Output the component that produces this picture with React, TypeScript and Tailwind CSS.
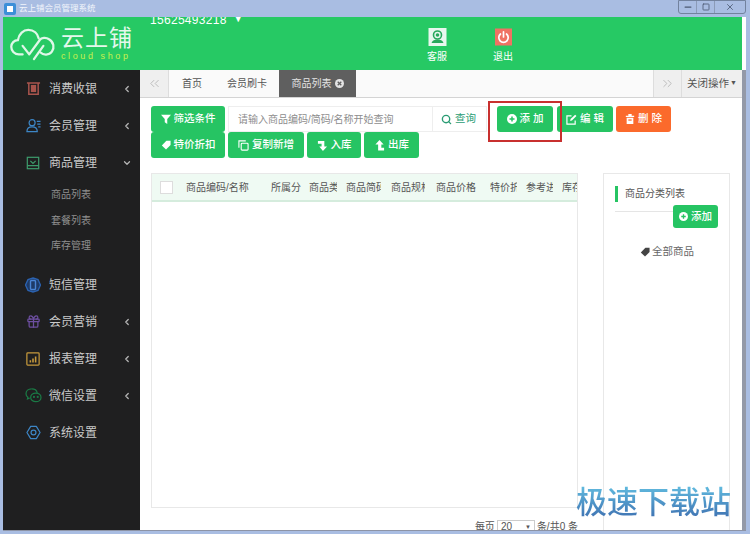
import React from 'react';
import { ChevronLeft, ChevronDown, ChevronsLeft, ChevronsRight, Search, Minus, Square, X, Gift } from 'lucide-react';

const cjk = "font-['Liberation_Sans','Noto_Sans_CJK_SC',sans-serif]";

function CloudLogo() {
  return (
    <svg viewBox="0 0 48 36" className="w-[46px] h-[34px]" fill="none" stroke="#dff7e8" strokeWidth="2.4" strokeLinecap="round" strokeLinejoin="round">
      <path d="M13 29 H9 C4 29 1 25 1 21 C1 17 4 14 8 14 C9 7 14 3 19 3 C25 3 29 7 30 12" />
      <path d="M13 20 L20 29 L31 14 C33 11 38 11 41 13 C46 16 47 22 44 26 C41 30 35 30 32 27" />
      <path d="M25 34 L35 20" />
    </svg>
  );
}

function CashIcon() {
  return (
    <svg viewBox="0 0 16 16" className="w-[15px] h-[15px]" fill="none" stroke="#a8544c" strokeWidth="1.6">
      <path d="M1 2 H15 M3 2 V14 H13 V2" />
      <rect x="6" y="5" width="4" height="6" fill="#a8544c" />
    </svg>
  );
}

function MemberIcon() {
  return (
    <svg viewBox="0 0 16 16" className="w-[15px] h-[15px]" fill="none" stroke="#3d86c6" strokeWidth="1.3">
      <circle cx="6.5" cy="5" r="3.2" />
      <path d="M1 14.5 C1 10.5 3.5 9.5 6.5 9.5 C9.5 9.5 12 10.5 12 14.5 Z" />
      <path d="M11.5 3.5 H15.5 M12 6.5 H15.5 M13 9.5 H15.5" />
    </svg>
  );
}

function GoodsIcon() {
  return (
    <svg viewBox="0 0 16 16" className="w-[14px] h-[14px]" fill="none" stroke="#3d9a6b" strokeWidth="1.4">
      <rect x="1.5" y="1.5" width="13" height="13" />
      <path d="M1.5 11 H14.5 M5 5.5 L8 8.5 L11 5.5" />
    </svg>
  );
}

function SmsIcon() {
  return (
    <svg viewBox="0 0 16 16" className="w-[16px] h-[16px]" fill="none" stroke="#2b62b0" strokeWidth="1.4">
      <path d="M8 1 L13 2.5 L15.5 8 L13 13.5 L8 15 L3 13.5 L.5 8 L3 2.5 Z" fill="#1e3a66" />
      <rect x="5.5" y="3.5" width="5" height="9" rx="1" stroke="#4a84d4" />
    </svg>
  );
}

function ReportIcon() {
  return (
    <svg viewBox="0 0 16 16" className="w-[14px] h-[14px]" fill="none" stroke="#c79a3c" strokeWidth="1.4">
      <rect x="1" y="1" width="14" height="14" rx="1" />
      <path d="M5 12 V9.5 M8 12 V7.5 M11 12 V5" strokeWidth="1.8" />
    </svg>
  );
}

function WechatIcon() {
  return (
    <svg viewBox="0 0 18 16" className="w-[17px] h-[15px]" fill="none" stroke="#1a7a45" strokeWidth="1.3">
      <path d="M7 1 C3.5 1 1 3.2 1 6 C1 7.6 1.8 8.9 3 9.8 L2.6 11.6 L5 10.6" />
      <path d="M7 1 C10 1 12.5 2.8 13 5.2" />
      <ellipse cx="11.5" cy="10" rx="5.5" ry="4.6" />
      <circle cx="9.5" cy="9.5" r=".5" />
      <circle cx="13.5" cy="9.5" r=".5" />
    </svg>
  );
}

function GearIcon() {
  return (
    <svg viewBox="0 0 16 16" className="w-[15px] h-[15px]" fill="none" stroke="#3d86c6" strokeWidth="1.3">
      <path d="M5 1.5 H11 L15 8 L11 14.5 H5 L1 8 Z" strokeLinejoin="round" />
      <circle cx="8" cy="8" r="2.6" />
    </svg>
  );
}

function PlusDot({ size = 'w-[10px] h-[10px]', fill = '#26c463' }: { size?: string; fill?: string }) {
  return (
    <svg viewBox="0 0 12 12" className={size}>
      <circle cx="6" cy="6" r="6" fill="#ffffff" />
      <path d="M3 6 H9 M6 3 V9" stroke={fill} strokeWidth="1.8" />
    </svg>
  );
}

function FilterSolid() {
  return (
    <svg viewBox="0 0 12 12" className="w-[10px] h-[10px]" fill="#ffffff">
      <path d="M0 1 H12 L7.5 6 V12 L4.5 10 V6 Z" />
    </svg>
  );
}

function TagSolid({ color = '#ffffff' }: { color?: string }) {
  return (
    <svg viewBox="0 0 12 12" className="w-[10px] h-[10px]" fill={color}>
      <path d="M6.5 1 H11.5 V6 L6 11.5 L1 6.5 Z" />
    </svg>
  );
}

function CopyIcon() {
  return (
    <svg viewBox="0 0 12 12" className="w-[11px] h-[11px]" fill="none" stroke="#ffffff" strokeWidth="1.2">
      <path d="M1 8.5 V1 H8.5" />
      <rect x="3.5" y="3.5" width="7.5" height="7.5" rx="1" />
    </svg>
  );
}

function InIcon() {
  return (
    <svg viewBox="0 0 12 12" className="w-[11px] h-[11px]" fill="#ffffff">
      <path d="M1 1 H8 V7 H11 L6.5 12 L2.5 7 H5 V4 H1 Z" />
    </svg>
  );
}

function OutIcon() {
  return (
    <svg viewBox="0 0 12 12" className="w-[11px] h-[11px]" fill="#ffffff">
      <path d="M6 0 L10.5 5 H8 V8.5 H11 V11.5 H4.5 V5 H1.5 Z" />
    </svg>
  );
}

function EditIcon() {
  return (
    <svg viewBox="0 0 12 12" className="w-[11px] h-[11px]" fill="none" stroke="#ffffff" strokeWidth="1.3">
      <path d="M10 7 V11 H1 V2 H6" />
      <path d="M4.5 7.5 L5 5.5 L10 .8 L11.4 2.2 L6.5 7 Z" fill="#ffffff" stroke="none" />
    </svg>
  );
}

function TrashIcon() {
  return (
    <svg viewBox="0 0 12 12" className="w-[10px] h-[10px]" fill="#ffffff">
      <path d="M4 0 H8 V2 H11 V3.5 H1 V2 H4 Z M2 4.5 H10 V12 H2 Z" />
      <path d="M4 6.5 H8 V8 H4 Z" fill="#fb6a2c" />
    </svg>
  );
}

function ServiceIcon() {
  return (
    <svg viewBox="0 0 18 18" className="w-[19px] h-[18px]" fill="none">
      <rect width="18" height="18" fill="#e8f7ee" />
      <circle cx="9" cy="7" r="4" stroke="#27a85c" strokeWidth="1.6" />
      <circle cx="9" cy="7" r="1.8" fill="#27a85c" />
      <path d="M3 15 C4 12 6 11.5 9 11.5 C12 11.5 14 12 15 15 Z" fill="#27a85c" />
    </svg>
  );
}

function ExitIcon() {
  return (
    <svg viewBox="0 0 18 18" className="w-[17px] h-[18px]" fill="none" stroke="#ffffff" strokeWidth="1.8" strokeLinecap="round">
      <rect width="18" height="18" fill="#ef7263" stroke="none" />
      <path d="M5.8 5.8 A5 5 0 1 0 12.2 5.8 M9 3.5 V9" />
    </svg>
  );
}

function NavRow({ icon, label, arrow }: { icon: React.ReactNode; label: string; arrow?: 'left' | 'down' }) {
  return (
    <div className="h-[37px] flex items-center pl-[17px] pr-[8px]">
      <div className="w-[26px] flex justify-center shrink-0">{icon}</div>
      <span className="ml-[3px] text-[12px] text-[#c9c9c9] flex-1">{label}</span>
      {arrow === 'left' && <ChevronLeft className="w-[10px] h-[10px] text-[#b5b5b5]" strokeWidth={3} />}
      {arrow === 'down' && <ChevronDown className="w-[10px] h-[10px] text-[#b5b5b5]" strokeWidth={3} />}
    </div>
  );
}

function Btn({ icon, label, w, color = 'bg-[#26c463]', h = 'h-[26px]' }: { icon: React.ReactNode; label: string; w: string; color?: string; h?: string }) {
  return (
    <div className={`${w} ${h} ${color} rounded-[3px] flex items-center justify-center gap-[3px] text-white text-[10.5px] font-medium shrink-0`}>
      {icon}
      <span>{label}</span>
    </div>
  );
}

export default function App() {
  // slot width, then the width the label is clipped to
  const cols = [
    ['w-[85px]', 'w-[68px]', '商品编码/名称'],
    ['w-[38px]', 'w-[30px]', '所属分类'],
    ['w-[37px]', 'w-[28px]', '商品类别'],
    ['w-[45px]', 'w-[35px]', '商品简码'],
    ['w-[45px]', 'w-[34px]', '商品规格'],
    ['w-[54px]', 'w-[44px]', '商品价格'],
    ['w-[36px]', 'w-[27px]', '特价折扣'],
    ['w-[36px]', 'w-[27px]', '参考进价'],
    ['w-[15px]', 'w-[15px]', '库存'],
  ];

  return (
    <div className={`${cjk} relative w-[750px] h-[534px] overflow-hidden flex flex-col bg-[#a9bde2]`}>
      {/* Title bar */}
      <div className="h-[17px] shrink-0 flex items-center pl-[4px]">
        <div className="w-[12px] h-[12px] bg-[#3d8fd8] rounded-[2px] flex items-center justify-center">
          <div className="w-[6px] h-[6px] bg-white" />
        </div>
        <span className="ml-[3px] text-[8.5px] text-[#f2f5fb]">云上铺会员管理系统</span>
        <div className="ml-auto mr-[4px] flex h-[14px] -mt-[3px] border border-[#72829e] rounded-b-[3px] text-[#4c5a73]">
          <div className="w-[18px] flex items-center justify-center border-r border-[#8b9bb8]"><Minus className="w-[10px] h-[10px]" strokeWidth={3} /></div>
          <div className="w-[18px] flex items-center justify-center border-r border-[#8b9bb8]"><Square className="w-[8px] h-[8px]" strokeWidth={2.5} /></div>
          <div className="w-[30px] flex items-center justify-center"><X className="w-[10px] h-[10px]" strokeWidth={2} /></div>
        </div>
      </div>

      <div className="flex-1 min-h-0 flex flex-col ml-[3px] mr-[4px] mb-[3px] border-b border-[#8d94a6]">
        {/* Header */}
        <div className="h-[53px] shrink-0 bg-[#26c964] flex relative overflow-hidden box-content border-r-[4px] border-white">
          <div className="w-[137px] shrink-0 flex items-center pl-[7px] pt-[1px]">
            <CloudLogo />
            <div className="ml-[5px] flex flex-col items-start">
              <span className="text-[23px] leading-[25px] text-[#e4f8ec] tracking-[1px]">云上铺</span>
              <span className="text-[9px] leading-[11px] text-[#c9f04e] font-medium tracking-[2.6px] whitespace-nowrap">cloud shop</span>
            </div>
          </div>
          <div className="absolute left-[147px] -top-[6px] text-[12px] text-white tracking-[0.3px] flex items-center gap-[7px]">
            <span>15625493218</span>
            <span className="text-[9px]">▼</span>
          </div>
          <div className="ml-[287px] flex gap-[46px] pt-[11px]">
            <div className="flex flex-col items-center w-[20px]">
              <ServiceIcon />
              <span className="mt-[4px] text-[10px] leading-[14px] text-white whitespace-nowrap">客服</span>
            </div>
            <div className="flex flex-col items-center w-[20px]">
              <ExitIcon />
              <span className="mt-[4px] text-[10px] leading-[14px] text-white whitespace-nowrap">退出</span>
            </div>
          </div>
        </div>

        <div className="flex-1 min-h-0 flex border-r-[4px] border-[#9399a8] bg-white">
          {/* Sidebar */}
          <div className="w-[137px] shrink-0 bg-[#1f1f20]">
            <NavRow icon={<CashIcon />} label="消费收银" arrow="left" />
            <NavRow icon={<MemberIcon />} label="会员管理" arrow="left" />
            <NavRow icon={<GoodsIcon />} label="商品管理" arrow="down" />
            <div className="flex flex-col pl-[48px] text-[10px] text-[#8f8f8f]">
              <div className="h-[26px] flex items-center">商品列表</div>
              <div className="h-[26px] flex items-center">套餐列表</div>
              <div className="h-[25px] flex items-center">库存管理</div>
            </div>
            <div className="mt-[8px]">
              <NavRow icon={<SmsIcon />} label="短信管理" />
              <NavRow icon={<Gift className="w-[15px] h-[15px] text-[#6d4fa0]" />} label="会员营销" arrow="left" />
              <NavRow icon={<ReportIcon />} label="报表管理" arrow="left" />
              <NavRow icon={<WechatIcon />} label="微信设置" arrow="left" />
              <NavRow icon={<GearIcon />} label="系统设置" />
            </div>
          </div>

          {/* Main */}
          <div className="flex-1 min-w-0 flex flex-col overflow-hidden">
            {/* Tabs */}
            <div className="h-[28px] shrink-0 flex items-stretch bg-[#fafafa] border-b border-[#d4d4d4] text-[10px] text-[#555555]">
              <div className="w-[29px] bg-[#efefef] border-r border-[#dddddd] flex items-center justify-center">
                <ChevronsLeft className="w-[15px] h-[15px] text-[#b9b9b9]" strokeWidth={1.5} />
              </div>
              <div className="w-[46px] flex items-center justify-center">首页</div>
              <div className="w-[64px] flex items-center justify-center">会员刷卡</div>
              <div className="w-[77px] bg-[#5f5f5f] flex items-center justify-center gap-[3px] text-[#e4e4e4]">
                商品列表
                <svg viewBox="0 0 10 10" className="w-[9px] h-[9px]">
                  <circle cx="5" cy="5" r="5" fill="#e4e4e4" />
                  <path d="M3 3 L7 7 M7 3 L3 7" stroke="#5f5f5f" strokeWidth="1.4" />
                </svg>
              </div>
              <div className="ml-auto w-[29px] bg-[#efefef] border-x border-[#dddddd] flex items-center justify-center">
                <ChevronsRight className="w-[15px] h-[15px] text-[#b9b9b9]" strokeWidth={1.5} />
              </div>
              <div className="w-[60px] bg-[#efefef] flex items-center justify-center whitespace-nowrap text-[10.5px]">
                关闭操作<span className="text-[7px] ml-[1px]">▼</span>
              </div>
            </div>

            {/* Toolbar */}
            <div className="mt-[8px] ml-[11px] flex flex-col shrink-0">
              <div className="flex">
                <Btn icon={<FilterSolid />} label="筛选条件" w="w-[74px]" />
                <div className="ml-[3px] w-[259px] h-[26px] border border-[#eeeeee] flex items-center text-[10px]">
                  <span className="ml-[9px] w-[194px] text-[#8d8d8d] whitespace-nowrap">请输入商品编码/简码/名称开始查询</span>
                  <div className="h-full border-l border-[#eeeeee] pl-[8px] flex items-center gap-[3px] text-[#2a9c74] text-[10.5px]">
                    <Search className="w-[11px] h-[11px]" strokeWidth={3} />
                    查询
                  </div>
                </div>
                <div className="ml-[10px] flex">
                  <Btn icon={<PlusDot />} label="添 加" w="w-[56px]" />
                  <div className="ml-[4px]">
                    <Btn icon={<EditIcon />} label="编 辑" w="w-[56px]" />
                  </div>
                  <div className="ml-[3px]">
                    <Btn icon={<TrashIcon />} label="删 除" w="w-[55px]" color="bg-[#fb6a2c]" />
                  </div>
                </div>
              </div>
              <div className="flex gap-[3px]">
                <Btn icon={<TagSolid />} label="特价折扣" w="w-[74px]" />
                <Btn icon={<CopyIcon />} label="复制新增" w="w-[76px]" />
                <Btn icon={<InIcon />} label="入库" w="w-[54px]" />
                <Btn icon={<OutIcon />} label="出库" w="w-[55px]" />
              </div>
            </div>

            {/* Table and category panel */}
            <div className="mt-[15px] ml-[11px] flex flex-1 min-h-0">
              <div className="w-[427px] shrink-0 flex flex-col">
                <div className="h-[335px] shrink-0 border border-[#e8e8e8] flex flex-col">
                  <div className="h-[28px] bg-[#effaf3] border-b-2 border-[#d5ecdd] flex items-center overflow-hidden text-[10px] text-[#555555]">
                    <div className="ml-[8px] mr-[13px] w-[13px] h-[13px] bg-white border border-[#dddddd] shrink-0" />
                    {cols.map(([slot, clip, label]) => (
                      <div key={label} className={`${slot} shrink-0`}>
                        <div className={`${clip} overflow-hidden whitespace-nowrap`}>{label}</div>
                      </div>
                    ))}
                  </div>
                </div>
                <div className="mt-[12px] flex justify-end items-center text-[10px] leading-[14px] text-[#555555] whitespace-nowrap">
                  每页
                  <div className="mx-[2px] w-[38px] h-[14px] border border-[#cccccc] px-[3px] flex items-center justify-between">
                    20<span className="text-[6px]">▼</span>
                  </div>
                  条/共0 条
                </div>
              </div>

              <div className="ml-[25px] w-[127px] shrink-0 h-[400px] border border-[#e8e8e8] pt-[12px] pl-[11px]">
                <div className="border-l-[3px] border-[#26c463] pl-[7px] text-[10px] leading-[16px] text-[#555555] whitespace-nowrap">商品分类列表</div>
                <div className="mt-[9px] mr-[11px] border-t border-[#e5e5e5]" />
                <div className="flex justify-end mr-[11px] -mt-[7px]">
                  <Btn icon={<PlusDot size="w-[9px] h-[9px]" />} label="添加" w="w-[45px]" h="h-[23px]" />
                </div>
                <div className="mt-[16px] flex items-center justify-center gap-[2px] pr-[10px] text-[10.5px] text-[#666666]">
                  <TagSolid color="#444444" />
                  全部商品
                </div>
              </div>
            </div>
          </div>
        </div>
      </div>

      {/* Annotation box over the add button */}
      <div className="absolute left-[488px] top-[101px] w-[74px] h-[41px] border-2 border-[#c8302f]" />

      {/* Watermark */}
      <div className="absolute left-[576px] top-[485px] text-[31px] leading-[36px] font-medium bg-gradient-to-b from-[#62bde0] to-[#3d6cae] bg-clip-text text-transparent whitespace-nowrap">极速下载站</div>
    </div>
  );
}
